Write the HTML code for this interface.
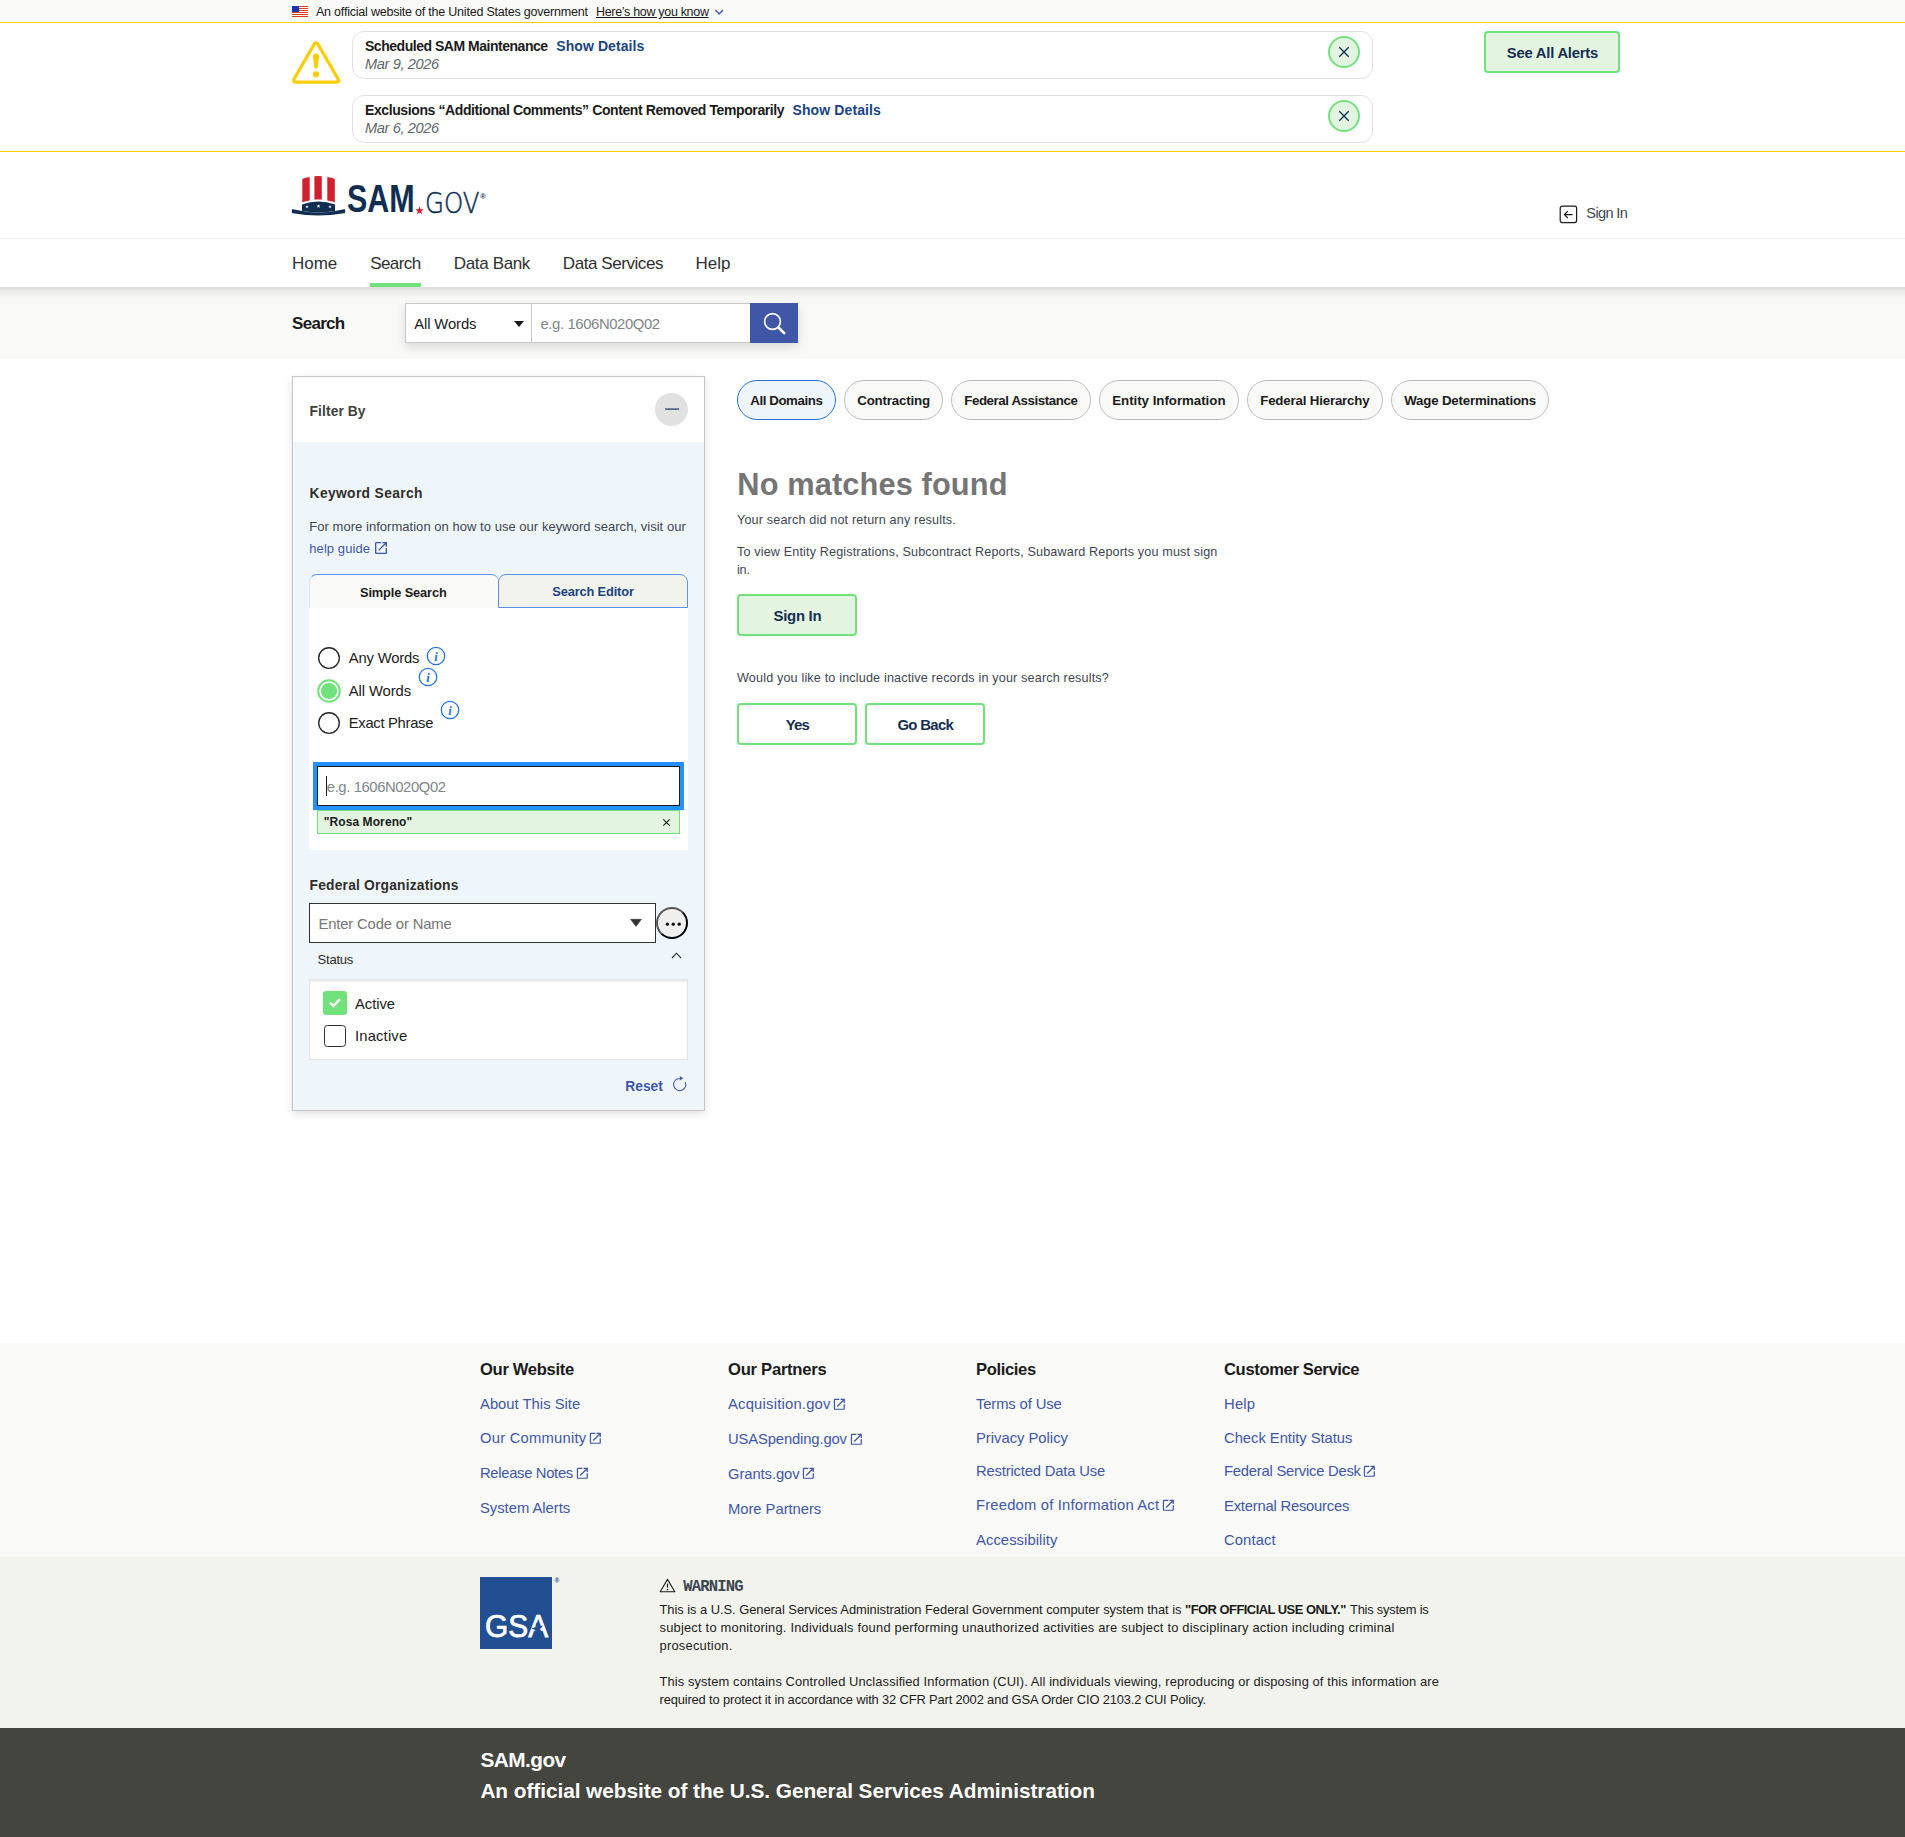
<!DOCTYPE html>
<html lang="en"><head><meta charset="utf-8"><title>SAM.gov | Search</title>
<style>
*{box-sizing:border-box;margin:0;padding:0}
html,body{width:1905px;height:1837px;overflow:hidden;background:#fff}
body{font-family:"Liberation Sans",sans-serif;color:#1b1b1b}
#wrap{position:relative;width:1905px;height:1837px;overflow:hidden}
.b{position:absolute}
.t{position:absolute;white-space:nowrap;line-height:20px;height:20px}
svg{position:absolute;overflow:visible}
.p{display:inline-block;width:0;height:0}
a.t{text-decoration:none}
h1.t,h2.t{font-weight:700}

</style></head><body>
<div id="wrap">
<header>
<div class="b" style="left:0px;top:0px;width:1905px;height:22px;background:#f9f9f7"></div>
<svg style="left:292px;top:6px" width="16" height="11" viewBox="0 0 16 11"><rect width="16" height="11" fill="#fff"/><g fill="#db3e1f"><rect y="0" width="16" height="1"/><rect y="2" width="16" height="1"/><rect y="4" width="16" height="1"/><rect y="6" width="16" height="1"/><rect y="8" width="16" height="1"/><rect y="10" width="16" height="1"/></g><rect width="7" height="6" fill="#1e33b1"/></svg>
<svg style="left:715px;top:9px" width="8" height="6" viewBox="0 0 8 6"><path d="M0.4 1 L4.2 4.9 L8 1" fill="none" stroke="#3f57a6" stroke-width="1.5"/></svg>
<div class="b" style="left:0px;top:22px;width:1905px;height:1px;background:#face00"></div>
<div class="b" style="left:0px;top:151px;width:1905px;height:1px;background:#face00"></div>
<svg style="left:292px;top:41px" width="48" height="43" viewBox="0 0 48 43"><path d="M24.1 3.8 L44.7 39.2 L3.5 39.2 Z" fill="#facd00" stroke="#facd00" stroke-width="7" stroke-linejoin="round"/><path d="M24.1 3.8 L44.7 39.2 L3.5 39.2 Z" fill="#fff" stroke="#fff" stroke-width="0.6" stroke-linejoin="round"/><path d="M20.95 15.4 Q20.9 12.5 24 12.5 Q27.1 12.5 27.05 15.4 L25.8 26 Q25.6 27.6 24 27.6 Q22.4 27.6 22.2 26 Z" fill="#facd00"/><circle cx="24" cy="33.4" r="3.05" fill="#facd00"/></svg>
<div class="b" style="left:352px;top:31px;width:1021px;height:48px;border:1px solid #dfe1e2;border-radius:12px;background:#fff"></div>
<svg style="left:1328px;top:36px" width="32" height="32" viewBox="0 0 32 32"><circle cx="16" cy="16" r="15" fill="#e3f5e1" stroke="#70e17b" stroke-width="2"/><path d="M11.3 11.3 L20.7 20.7 M20.7 11.3 L11.3 20.7" stroke="#162e51" stroke-width="1.35"/></svg>
<div class="b" style="left:352px;top:95px;width:1021px;height:48px;border:1px solid #dfe1e2;border-radius:12px;background:#fff"></div>
<svg style="left:1328px;top:100px" width="32" height="32" viewBox="0 0 32 32"><circle cx="16" cy="16" r="15" fill="#e3f5e1" stroke="#70e17b" stroke-width="2"/><path d="M11.3 11.3 L20.7 20.7 M20.7 11.3 L11.3 20.7" stroke="#162e51" stroke-width="1.35"/></svg>
<div class="b" style="left:1484px;top:31px;width:136px;height:42px;border:2px solid #70e17b;border-radius:4px;background:#e3f5e1"></div>
<div class="b" style="left:0px;top:238px;width:1905px;height:1px;background:#f0f0f0"></div>
<svg style="left:291px;top:175px" width="56" height="42" viewBox="0 0 56 42">
<g fill="#d0202e">
<path d="M11.3 4 Q14.5 2.6 18.7 2 L18.7 25.5 Q14.5 26 11.3 27.2 Z"/>
<path d="M23.4 1.2 Q27 0.8 30.8 1.2 L30.8 24.6 Q27 24.2 23.4 24.6 Z"/>
<path d="M36.3 2 Q40.5 2.6 43.8 4 L43.8 27.2 Q40.5 26 36.3 25.5 Z"/>
</g>
<path d="M11 29.6 Q27.5 23.2 44 29.6 L44 36.3 Q27.5 38.6 11 36.3 Z" fill="#112e51"/>
<path d="M0.8 34.9 Q1 33.9 2 34.2 Q27.5 40.8 53 34.2 Q54 33.9 54.2 34.9 L54.2 36.9 Q54 38 53 38.2 Q27.5 42.6 2 38.2 Q1 38 0.8 36.9 Z" fill="#112e51"/>
<g fill="#fff">
<path transform="translate(16,31.8) scale(0.17)" d="M0,-10 L2.4,-3.1 9.5,-3.1 3.8,1.2 5.9,8.1 0,3.9 -5.9,8.1 -3.8,1.2 -9.5,-3.1 -2.4,-3.1Z"/>
<path transform="translate(27.5,31.2) scale(0.2)" d="M0,-10 L2.4,-3.1 9.5,-3.1 3.8,1.2 5.9,8.1 0,3.9 -5.9,8.1 -3.8,1.2 -9.5,-3.1 -2.4,-3.1Z"/>
<path transform="translate(39,31.8) scale(0.17)" d="M0,-10 L2.4,-3.1 9.5,-3.1 3.8,1.2 5.9,8.1 0,3.9 -5.9,8.1 -3.8,1.2 -9.5,-3.1 -2.4,-3.1Z"/>
</g></svg>
<svg style="left:415px;top:206px" width="9" height="9" viewBox="-10 -10.5 20 20"><path d="M0,-10 L2.4,-3.1 9.5,-3.1 3.8,1.2 5.9,8.1 0,3.9 -5.9,8.1 -3.8,1.2 -9.5,-3.1 -2.4,-3.1Z" fill="#d0202e"/></svg>
<svg style="left:1559px;top:205px" width="19" height="19" viewBox="0 0 19 19"><rect x="1.2" y="1.2" width="16.4" height="16.4" rx="2" fill="none" stroke="#1b1b1b" stroke-width="1.2"/><path d="M13.6 9.6 H5.6 M8.8 6.2 L5.4 9.6 L8.8 13" fill="none" stroke="#1b1b1b" stroke-width="1.2"/></svg>
<div class="b" style="left:370px;top:283px;width:51px;height:4px;background:#70e17b"></div>
<div class="b" style="left:0px;top:287px;width:1905px;height:72px;background:#f9f9f7"></div>
<div class="b" style="left:0px;top:287px;width:1905px;height:13px;background:linear-gradient(to bottom,rgba(0,0,0,.105),rgba(0,0,0,.04) 45%,rgba(0,0,0,0))"></div>
<div class="b" style="left:405px;top:303px;width:393px;height:40px;box-shadow:0 4px 10px rgba(0,0,0,.13);background:#fff"></div>
<div class="b" style="left:405px;top:303px;width:127px;height:40px;border:1px solid #c9c9c9;background:#fff"></div>
<div class="b" style="left:531px;top:303px;width:220px;height:40px;border:1px solid #c9c9c9;background:#fff"></div>
<svg style="left:514px;top:321px" width="10" height="6" viewBox="0 0 10 6"><path d="M0 0 H10 L5 6 Z" fill="#1b1b1b"/></svg>
<div class="b" style="left:750px;top:303px;width:48px;height:40px;background:#3f57a6"></div>
<svg style="left:750px;top:303px" width="48" height="40" viewBox="0 0 48 40"><circle cx="22.5" cy="18.5" r="7.9" fill="none" stroke="#fff" stroke-width="1.6"/><path d="M28.4 24.5 L34.2 30.1" stroke="#fff" stroke-width="2.6" stroke-linecap="round"/></svg>
<span class="t" style="left:316px;top:2.00px;font-size:12.5px;letter-spacing:-0.213px;">An official website of the United States government</span>
<span class="t" style="left:596px;top:2.00px;font-size:12.5px;letter-spacing:-0.315px;text-decoration:underline;text-underline-offset:1px;">Here’s how you know</span>
<span class="t" style="left:365px;top:36.00px;font-size:14px;font-weight:700;letter-spacing:-0.475px;">Scheduled SAM Maintenance</span>
<span class="t" style="left:556.3px;top:36.00px;font-size:14px;font-weight:700;color:#1a4480;letter-spacing:0.072px;">Show Details</span>
<span class="t" style="left:365px;top:54.00px;font-size:14.6px;color:#61666d;letter-spacing:-0.381px;font-style:italic;">Mar 9, 2026</span>
<span class="t" style="left:365px;top:100.00px;font-size:14px;font-weight:700;letter-spacing:-0.399px;">Exclusions “Additional Comments” Content Removed Temporarily</span>
<span class="t" style="left:792.5px;top:100.00px;font-size:14px;font-weight:700;color:#1a4480;letter-spacing:0.113px;">Show Details</span>
<span class="t" style="left:365px;top:118.00px;font-size:14.6px;color:#61666d;letter-spacing:-0.381px;font-style:italic;">Mar 6, 2026</span>
<span class="t" style="left:1506.8px;top:43.00px;font-size:14.8px;font-weight:700;color:#162e51;letter-spacing:-0.222px;">See All Alerts</span>
<span class="t" style="left:347.2px;top:189.40px;font-size:38.6px;font-weight:700;color:#112e51;transform:scaleX(0.79);transform-origin:0 50%;">SAM</span>
<span class="t" style="left:425.3px;top:192.60px;font-size:28.6px;font-weight:200;color:#112e51;font-family:'DejaVu Sans Light','DejaVu Sans',sans-serif;transform:scaleX(0.855);transform-origin:0 50%;-webkit-text-stroke:0.5px #112e51;">GOV</span>
<span class="t" style="left:480.3px;top:186.80px;font-size:7.5px;font-weight:700;color:#112e51;">®</span>
<span class="t" style="left:1586.3px;top:203.00px;font-size:14.6px;color:#3d4551;letter-spacing:-0.648px;">Sign In</span>
<span class="t" style="left:292px;top:254.00px;font-size:17px;color:#2e2f31;letter-spacing:-0.015px;">Home</span>
<span class="t" style="left:370.2px;top:254.00px;font-size:17px;color:#2e2f31;letter-spacing:-0.579px;">Search</span>
<span class="t" style="left:453.8px;top:254.00px;font-size:17px;color:#2e2f31;letter-spacing:-0.355px;">Data Bank</span>
<span class="t" style="left:562.8px;top:254.00px;font-size:17px;color:#2e2f31;letter-spacing:-0.433px;">Data Services</span>
<span class="t" style="left:695.6px;top:254.00px;font-size:17px;color:#2e2f31;letter-spacing:-0.042px;">Help</span>
<span class="t" style="left:292px;top:314.00px;font-size:17px;font-weight:700;letter-spacing:-0.701px;">Search</span>
<span class="t" style="left:414.2px;top:314.00px;font-size:14.8px;letter-spacing:-0.094px;">All Words</span>
<span class="t" style="left:540.5px;top:314.00px;font-size:14.8px;color:#80858a;letter-spacing:-0.366px;">e.g. 1606N020Q02</span>
</header>
<main>
<div class="b" style="left:292px;top:376px;width:413px;height:735px;border:1px solid #c4c5c6;background:#eff6fb;box-shadow:0 3px 8px rgba(0,0,0,.12)"></div>
<div class="b" style="left:293px;top:377px;width:411px;height:65px;background:#fff"></div>
<svg style="left:655px;top:393px" width="33" height="33" viewBox="0 0 33 33"><circle cx="16.45" cy="16.4" r="16.5" fill="#e1e1e1"/><path d="M10.1 16.1 H24.1" stroke="#162e51" stroke-width="1.2"/></svg>
<svg style="left:372.8px;top:540.3px" width="16" height="16" viewBox="0 0 24 24"><path fill="#3f57a6" d="M19 19H5V5h7V3H5a2 2 0 00-2 2v14a2 2 0 002 2h14c1.1 0 2-.9 2-2v-7h-2v7zM14 3v2h3.59l-9.83 9.83 1.41 1.41L19 6.41V10h2V3h-7z"/></svg>
<div class="b" style="left:309px;top:574px;width:190px;height:34px;background:#f9f9f7;border-top:1px solid #5b92ee;border-left:1px solid #d5e4f6;border-radius:8px 8px 0 0"></div>
<div class="b" style="left:498px;top:574px;width:190px;height:34px;background:#f3f3ee;border:1px solid #5b92ee;border-radius:8px 8px 0 0"></div>
<div class="b" style="left:309px;top:608px;width:379px;height:242px;background:#fff"></div>
<svg style="left:317px;top:645.9px" width="24" height="24" viewBox="0 0 24 24"><circle cx="12" cy="12" r="10.3" fill="#fff" stroke="#262626" stroke-width="1.35"/></svg>
<svg style="left:317px;top:678.9px" width="24" height="24" viewBox="0 0 24 24"><circle cx="12" cy="12" r="10.8" fill="#fff" stroke="#70e17b" stroke-width="2"/><circle cx="12" cy="12" r="8.1" fill="#70e17b"/></svg>
<svg style="left:317px;top:710.8px" width="24" height="24" viewBox="0 0 24 24"><circle cx="12" cy="12" r="10.3" fill="#fff" stroke="#262626" stroke-width="1.35"/></svg>
<svg style="left:426.0px;top:646.2px" width="20" height="20" viewBox="0 0 20 20"><circle cx="10" cy="10" r="8.7" fill="none" stroke="#2672de" stroke-width="1.25"/><text x="10" y="14.8" text-anchor="middle" font-family="Liberation Serif,serif" font-style="italic" font-weight="700" font-size="12.5" fill="#2672de">i</text></svg>
<svg style="left:418.2px;top:667.2px" width="20" height="20" viewBox="0 0 20 20"><circle cx="10" cy="10" r="8.7" fill="none" stroke="#2672de" stroke-width="1.25"/><text x="10" y="14.8" text-anchor="middle" font-family="Liberation Serif,serif" font-style="italic" font-weight="700" font-size="12.5" fill="#2672de">i</text></svg>
<svg style="left:440.1px;top:699.9px" width="20" height="20" viewBox="0 0 20 20"><circle cx="10" cy="10" r="8.7" fill="none" stroke="#2672de" stroke-width="1.25"/><text x="10" y="14.8" text-anchor="middle" font-family="Liberation Serif,serif" font-style="italic" font-weight="700" font-size="12.5" fill="#2672de">i</text></svg>
<div class="b" style="left:313px;top:762px;width:371px;height:48px;background:#2491ff"></div>
<div class="b" style="left:317px;top:766px;width:363px;height:40px;background:#fff;border:1px solid #1b1b1b"></div>
<div class="b" style="left:326px;top:776px;width:1px;height:20px;background:#1b1b1b"></div>
<div class="b" style="left:317px;top:810px;width:363px;height:24px;background:#e3f5e1;border:1px solid #70e17b"></div>
<svg style="left:662px;top:818px" width="9" height="9" viewBox="0 0 9 9"><path d="M1.3 1.3 L7.7 7.7 M7.7 1.3 L1.3 7.7" stroke="#1b1b1b" stroke-width="1.1"/></svg>
<div class="b" style="left:309px;top:903px;width:347px;height:40px;background:#fff;border:1px solid #33332f"></div>
<svg style="left:630px;top:919px" width="12" height="8" viewBox="0 0 12 8"><path d="M0.6 0.3 H11.4 L6 7.4 Z" fill="#33332f" stroke="#33332f" stroke-width="0.6" stroke-linejoin="round"/></svg>
<div class="b" style="left:656px;top:907px;width:32px;height:32px;border:2px outset #000;border-radius:50%;background:#efefef"></div>
<svg style="left:656px;top:907px" width="32" height="32" viewBox="0 0 32 32"><circle cx="11.4" cy="17.2" r="1.65" fill="#111"/><circle cx="17.25" cy="17.2" r="1.65" fill="#111"/><circle cx="23.2" cy="17.2" r="1.65" fill="#111"/></svg>
<svg style="left:671px;top:952px" width="12" height="7" viewBox="0 0 12 7"><path d="M1 6 L5.5 1.2 L10 6" fill="none" stroke="#2a2a2a" stroke-width="1.1"/></svg>
<div class="b" style="left:309px;top:979px;width:379px;height:81px;background:#fff;border:1px solid #e2e4e6;box-shadow:inset 0 2px 3px -1px rgba(0,0,0,.13)"></div>
<svg style="left:323px;top:991px" width="24" height="24" viewBox="0 0 24 24"><rect x="0" y="0" width="24" height="24" rx="3.3" fill="#70e17b"/><path d="M7.0 11.7 L10.4 15 L16.9 8.1" fill="none" stroke="#fff" stroke-width="2.4"/></svg>
<div class="b" style="left:324px;top:1025px;width:22px;height:22px;background:#fff;border:1.6px solid #33332f;border-radius:3.5px"></div>
<svg style="left:672px;top:1076px" width="16" height="16" viewBox="0 0 16 16"><path d="M13.23 5.92 A6.1 6.1 0 1 1 7.7 2.4" fill="none" stroke="#3f57a6" stroke-width="1.05"/><path d="M7.8 -0.1 L11.1 2.3 L7.8 4.8 Z" fill="#3f57a6"/></svg>
<div class="b" style="left:737px;top:380px;width:98.5px;height:40px;border:1px solid #2672de;background:#eff6fb;border-radius:20px"></div>
<div class="b" style="left:844px;top:380px;width:99px;height:40px;border:1px solid #bdbdbd;background:#f9f9f7;border-radius:20px"></div>
<div class="b" style="left:951px;top:380px;width:139.5px;height:40px;border:1px solid #bdbdbd;background:#f9f9f7;border-radius:20px"></div>
<div class="b" style="left:1099px;top:380px;width:139.5px;height:40px;border:1px solid #bdbdbd;background:#f9f9f7;border-radius:20px"></div>
<div class="b" style="left:1247px;top:380px;width:135.5px;height:40px;border:1px solid #bdbdbd;background:#f9f9f7;border-radius:20px"></div>
<div class="b" style="left:1391px;top:380px;width:158px;height:40px;border:1px solid #bdbdbd;background:#f9f9f7;border-radius:20px"></div>
<div class="b" style="left:737px;top:594px;width:120px;height:42px;border:2px solid #70e17b;border-radius:4px;background:#e3f5e1"></div>
<div class="b" style="left:737px;top:703px;width:120px;height:42px;border:2px solid #70e17b;border-radius:4px;background:#fff"></div>
<div class="b" style="left:865px;top:703px;width:120px;height:42px;border:2px solid #70e17b;border-radius:4px;background:#fff"></div>
<span class="t" style="left:309.6px;top:402.00px;font-size:13.8px;font-weight:700;color:#3f3f3c;letter-spacing:0.089px;">Filter By</span>
<span class="t" style="left:309.6px;top:484.00px;font-size:13.8px;font-weight:700;color:#2f2e2c;letter-spacing:0.363px;">Keyword Search</span>
<span class="t" style="left:309.3px;top:516.60px;font-size:13px;color:#3d4551;letter-spacing:0.035px;">For more information on how to use our keyword search, visit our</span>
<span class="t" style="left:309.3px;top:539.00px;font-size:13px;color:#3f57a6;letter-spacing:0.070px;">help guide</span>
<span class="t" style="left:360px;top:583.00px;font-size:12.8px;font-weight:700;letter-spacing:-0.116px;">Simple Search</span>
<span class="t" style="left:552.3px;top:582.00px;font-size:12.8px;font-weight:700;color:#1a4480;letter-spacing:-0.132px;">Search Editor</span>
<span class="t" style="left:348.8px;top:648.00px;font-size:14.8px;letter-spacing:-0.177px;">Any Words</span>
<span class="t" style="left:348.8px;top:681.00px;font-size:14.8px;letter-spacing:-0.094px;">All Words</span>
<span class="t" style="left:348.8px;top:713.00px;font-size:14.8px;letter-spacing:-0.310px;">Exact Phrase</span>
<span class="t" style="left:326.8px;top:777.00px;font-size:14.8px;color:#80858a;letter-spacing:-0.391px;">e.g. 1606N020Q02</span>
<span class="t" style="left:323.7px;top:812.00px;font-size:12px;font-weight:700;letter-spacing:0.093px;">"Rosa Moreno"</span>
<span class="t" style="left:309.6px;top:876.00px;font-size:13.8px;font-weight:700;color:#2f2e2c;letter-spacing:0.195px;">Federal Organizations</span>
<span class="t" style="left:318.5px;top:914.00px;font-size:14.8px;color:#757575;letter-spacing:-0.150px;">Enter Code or Name</span>
<span class="t" style="left:317.6px;top:950.00px;font-size:13px;color:#2a2a2a;letter-spacing:-0.227px;">Status</span>
<span class="t" style="left:355px;top:994.00px;font-size:14.8px;letter-spacing:-0.049px;">Active</span>
<span class="t" style="left:355px;top:1026.30px;font-size:14.8px;letter-spacing:0.162px;">Inactive</span>
<span class="t" style="left:625.3px;top:1077.00px;font-size:13.8px;font-weight:700;color:#3f57a6;letter-spacing:-0.016px;">Reset</span>
<span class="t" style="left:750.2px;top:391.00px;font-size:13.3px;font-weight:700;letter-spacing:-0.413px;">All Domains</span>
<span class="t" style="left:857.2px;top:391.00px;font-size:13.3px;font-weight:700;letter-spacing:-0.164px;">Contracting</span>
<span class="t" style="left:964.2px;top:391.00px;font-size:13.3px;font-weight:700;letter-spacing:-0.412px;">Federal Assistance</span>
<span class="t" style="left:1112.2px;top:391.00px;font-size:13.3px;font-weight:700;letter-spacing:-0.026px;">Entity Information</span>
<span class="t" style="left:1260.2px;top:391.00px;font-size:13.3px;font-weight:700;letter-spacing:-0.179px;">Federal Hierarchy</span>
<span class="t" style="left:1404.2px;top:391.00px;font-size:13.3px;font-weight:700;letter-spacing:-0.193px;">Wage Determinations</span>
<h1 class="t" style="left:737.3px;top:475.00px;font-size:30.8px;font-weight:700;color:#757575;letter-spacing:0.104px;">No matches found</h1>
<span class="t" style="left:737px;top:510.00px;font-size:12.6px;color:#3d4551;letter-spacing:0.170px;">Your search did not return any results.</span>
<span class="t" style="left:737px;top:542.00px;font-size:12.6px;color:#3d4551;letter-spacing:0.151px;">To view Entity Registrations, Subcontract Reports, Subaward Reports you must sign</span>
<span class="t" style="left:737px;top:560.00px;font-size:12.6px;color:#3d4551;letter-spacing:-0.2px;">in.</span>
<span class="t" style="left:773.5px;top:606.00px;font-size:14.9px;font-weight:700;color:#162e51;letter-spacing:-0.263px;">Sign In</span>
<span class="t" style="left:737px;top:668.00px;font-size:12.6px;color:#3d4551;letter-spacing:0.167px;">Would you like to include inactive records in your search results?</span>
<span class="t" style="left:785.8px;top:715.00px;font-size:14.9px;font-weight:700;color:#162e51;letter-spacing:-0.896px;">Yes</span>
<span class="t" style="left:897.4px;top:715.00px;font-size:14.9px;font-weight:700;color:#162e51;letter-spacing:-0.660px;">Go Back</span>
</main>
<footer>
<div class="b" style="left:0px;top:1343px;width:1905px;height:214px;background:#f9f9f7"></div>
<div class="b" style="left:0px;top:1557px;width:1905px;height:171px;background:#f3f3ee"></div>
<div class="b" style="left:0px;top:1728px;width:1905px;height:109px;background:#454540"></div>
<svg style="left:588.16px;top:1431.36px" width="14.7" height="14.7" viewBox="0 0 24 24"><path fill="#3f57a6" d="M19 19H5V5h7V3H5a2 2 0 00-2 2v14a2 2 0 002 2h14c1.1 0 2-.9 2-2v-7h-2v7zM14 3v2h3.59l-9.83 9.83 1.41 1.41L19 6.41V10h2V3h-7z"/></svg>
<svg style="left:574.56px;top:1466.36px" width="14.7" height="14.7" viewBox="0 0 24 24"><path fill="#3f57a6" d="M19 19H5V5h7V3H5a2 2 0 00-2 2v14a2 2 0 002 2h14c1.1 0 2-.9 2-2v-7h-2v7zM14 3v2h3.59l-9.83 9.83 1.41 1.41L19 6.41V10h2V3h-7z"/></svg>
<svg style="left:832.26px;top:1397.36px" width="14.7" height="14.7" viewBox="0 0 24 24"><path fill="#3f57a6" d="M19 19H5V5h7V3H5a2 2 0 00-2 2v14a2 2 0 002 2h14c1.1 0 2-.9 2-2v-7h-2v7zM14 3v2h3.59l-9.83 9.83 1.41 1.41L19 6.41V10h2V3h-7z"/></svg>
<svg style="left:848.56px;top:1432.36px" width="14.7" height="14.7" viewBox="0 0 24 24"><path fill="#3f57a6" d="M19 19H5V5h7V3H5a2 2 0 00-2 2v14a2 2 0 002 2h14c1.1 0 2-.9 2-2v-7h-2v7zM14 3v2h3.59l-9.83 9.83 1.41 1.41L19 6.41V10h2V3h-7z"/></svg>
<svg style="left:801.26px;top:1466.36px" width="14.7" height="14.7" viewBox="0 0 24 24"><path fill="#3f57a6" d="M19 19H5V5h7V3H5a2 2 0 00-2 2v14a2 2 0 002 2h14c1.1 0 2-.9 2-2v-7h-2v7zM14 3v2h3.59l-9.83 9.83 1.41 1.41L19 6.41V10h2V3h-7z"/></svg>
<svg style="left:1160.86px;top:1498.36px" width="14.7" height="14.7" viewBox="0 0 24 24"><path fill="#3f57a6" d="M19 19H5V5h7V3H5a2 2 0 00-2 2v14a2 2 0 002 2h14c1.1 0 2-.9 2-2v-7h-2v7zM14 3v2h3.59l-9.83 9.83 1.41 1.41L19 6.41V10h2V3h-7z"/></svg>
<svg style="left:1362.46px;top:1464.36px" width="14.7" height="14.7" viewBox="0 0 24 24"><path fill="#3f57a6" d="M19 19H5V5h7V3H5a2 2 0 00-2 2v14a2 2 0 002 2h14c1.1 0 2-.9 2-2v-7h-2v7zM14 3v2h3.59l-9.83 9.83 1.41 1.41L19 6.41V10h2V3h-7z"/></svg>
<div class="b" style="left:480px;top:1577px;width:72px;height:72px;background:#224f91"></div>
<svg style="left:659px;top:1578px" width="17" height="15" viewBox="0 0 17 15"><path d="M8.5 1.4 L15.8 13.8 H1.2 Z" fill="none" stroke="#1b1b1b" stroke-width="1.1" stroke-linejoin="round"/><path d="M8.5 5.6 V9.6" stroke="#1b1b1b" stroke-width="1.2"/><circle cx="8.5" cy="11.6" r="0.8" fill="#1b1b1b"/></svg>
<h2 class="t" style="left:480px;top:1360.00px;font-size:16.6px;font-weight:700;letter-spacing:-0.322px;">Our Website</h2>
<h2 class="t" style="left:728px;top:1360.00px;font-size:16.6px;font-weight:700;letter-spacing:-0.254px;">Our Partners</h2>
<h2 class="t" style="left:976px;top:1360.00px;font-size:16.6px;font-weight:700;letter-spacing:-0.367px;">Policies</h2>
<h2 class="t" style="left:1224px;top:1360.00px;font-size:16.6px;font-weight:700;letter-spacing:-0.370px;">Customer Service</h2>
<a class="t" style="left:480px;top:1393.70px;font-size:14.8px;color:#3f57a6;letter-spacing:0.008px;">About This Site</a>
<a class="t" style="left:480px;top:1427.80px;font-size:14.8px;color:#3f57a6;letter-spacing:0.222px;">Our Community</a>
<a class="t" style="left:480px;top:1462.50px;font-size:14.8px;color:#3f57a6;letter-spacing:-0.320px;">Release Notes</a>
<a class="t" style="left:480px;top:1497.70px;font-size:14.8px;color:#3f57a6;letter-spacing:-0.019px;">System Alerts</a>
<a class="t" style="left:728px;top:1393.70px;font-size:14.8px;color:#3f57a6;letter-spacing:0.205px;">Acquisition.gov</a>
<a class="t" style="left:728px;top:1428.90px;font-size:14.8px;color:#3f57a6;letter-spacing:-0.136px;">USASpending.gov</a>
<a class="t" style="left:728px;top:1463.50px;font-size:14.8px;color:#3f57a6;letter-spacing:-0.078px;">Grants.gov</a>
<a class="t" style="left:728px;top:1498.70px;font-size:14.8px;color:#3f57a6;letter-spacing:-0.042px;">More Partners</a>
<a class="t" style="left:976px;top:1393.70px;font-size:14.8px;color:#3f57a6;letter-spacing:-0.130px;">Terms of Use</a>
<a class="t" style="left:976px;top:1427.80px;font-size:14.8px;color:#3f57a6;letter-spacing:-0.014px;">Privacy Policy</a>
<a class="t" style="left:976px;top:1460.90px;font-size:14.8px;color:#3f57a6;letter-spacing:-0.174px;">Restricted Data Use</a>
<a class="t" style="left:976px;top:1495.00px;font-size:14.8px;color:#3f57a6;letter-spacing:0.182px;">Freedom of Information Act</a>
<a class="t" style="left:976px;top:1529.70px;font-size:14.8px;color:#3f57a6;letter-spacing:0.062px;">Accessibility</a>
<a class="t" style="left:1224px;top:1393.70px;font-size:14.8px;color:#3f57a6;letter-spacing:0.216px;">Help</a>
<a class="t" style="left:1224px;top:1427.80px;font-size:14.8px;color:#3f57a6;letter-spacing:-0.038px;">Check Entity Status</a>
<a class="t" style="left:1224px;top:1460.90px;font-size:14.8px;color:#3f57a6;letter-spacing:-0.233px;">Federal Service Desk</a>
<a class="t" style="left:1224px;top:1496.10px;font-size:14.8px;color:#3f57a6;letter-spacing:-0.218px;">External Resources</a>
<a class="t" style="left:1224px;top:1529.70px;font-size:14.8px;color:#3f57a6;letter-spacing:0.100px;">Contact</a>
<span class="t" style="left:484.6px;top:1615.70px;font-size:31.6px;color:#fff;transform:scaleX(0.945);transform-origin:0 50%;-webkit-text-stroke:0.75px #fff;">GSA</span>
<span class="t" style="left:554.6px;top:1570.50px;font-size:6.6px;font-weight:700;color:#224f91;">®</span>
<span class="t" style="left:683.3px;top:1577.00px;font-size:15.6px;font-weight:700;color:#3d4551;letter-spacing:-0.845px;font-family:'Liberation Mono',monospace;">WARNING</span>
<span class="t" style="left:659.5px;top:1599.70px;font-size:12.9px;letter-spacing:-0.036px;">This is a U.S. General Services Administration Federal Government computer system that is</span>
<span class="t" style="left:1185.1px;top:1599.70px;font-size:12.9px;font-weight:700;letter-spacing:-0.498px;">"FOR OFFICIAL USE ONLY."</span>
<span class="t" style="left:1350px;top:1599.70px;font-size:12.9px;letter-spacing:-0.225px;">This system is</span>
<span class="t" style="left:659.5px;top:1617.70px;font-size:12.9px;letter-spacing:0.210px;">subject to monitoring. Individuals found performing unauthorized activities are subject to disciplinary action including criminal</span>
<span class="t" style="left:659.5px;top:1635.60px;font-size:12.9px;letter-spacing:0.230px;">prosecution.</span>
<span class="t" style="left:659.5px;top:1671.60px;font-size:12.9px;letter-spacing:0.104px;">This system contains Controlled Unclassified Information (CUI). All individuals viewing, reproducing or disposing of this information are</span>
<span class="t" style="left:659.5px;top:1689.60px;font-size:12.9px;letter-spacing:-0.143px;">required to protect it in accordance with 32 CFR Part 2002 and GSA Order CIO 2103.2 CUI Policy.</span>
<span class="t" style="left:480.4px;top:1750.00px;font-size:20.8px;font-weight:700;color:#fff;letter-spacing:-0.538px;">SAM.gov</span>
<span class="t" style="left:480.4px;top:1781.00px;font-size:20.8px;font-weight:700;color:#fff;letter-spacing:-0.049px;">An official website of the U.S. General Services Administration</span>
<svg style="left:530.5px;top:1621.5px" width="13" height="13" viewBox="-10 -10.5 20 20"><path transform="rotate(-12)" d="M0,-10 L2.4,-3.1 9.5,-3.1 3.8,1.2 5.9,8.1 0,3.9 -5.9,8.1 -3.8,1.2 -9.5,-3.1 -2.4,-3.1Z" fill="#224f91"/></svg>
</footer>
</div>
</body></html>
